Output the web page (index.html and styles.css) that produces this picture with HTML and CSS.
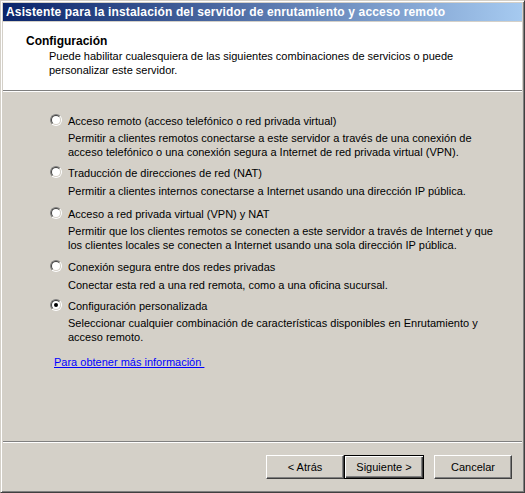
FILE: index.html
```html
<!DOCTYPE html>
<html lang="es">
<head>
<meta charset="utf-8">
<title>Asistente</title>
<link rel="stylesheet" href="styles.css">
</head>
<body>
<div class="window">
  <div class="titlebar">Asistente para la instalación del servidor de enrutamiento y acceso remoto</div>
  <div class="header">
    <div class="header-title">Configuración</div>
    <div class="header-text">Puede habilitar cualesquiera de las siguientes combinaciones de servicios o puede<br>personalizar este servidor.</div>
  </div>
  <div class="body">
    <div class="opt opt-1">
      <div class="opt-label"><span class="radio"></span>Acceso remoto (acceso telefónico o red privada virtual)</div>
      <div class="opt-desc">Permitir a clientes remotos conectarse a este servidor a través de una conexión de<br>acceso telefónico o una conexión segura a Internet de red privada virtual (VPN).</div>
    </div>
    <div class="opt opt-2">
      <div class="opt-label"><span class="radio"></span>Traducción de direcciones de red (NAT)</div>
      <div class="opt-desc">Permitir a clientes internos conectarse a Internet usando una dirección IP pública.</div>
    </div>
    <div class="opt opt-3">
      <div class="opt-label"><span class="radio"></span>Acceso a red privada virtual (VPN) y NAT</div>
      <div class="opt-desc">Permitir que los clientes remotos se conecten a este servidor a través de Internet y que<br>los clientes locales se conecten a Internet usando una sola dirección IP pública.</div>
    </div>
    <div class="opt opt-4">
      <div class="opt-label"><span class="radio"></span>Conexión segura entre dos redes privadas</div>
      <div class="opt-desc">Conectar esta red a una red remota, como a una oficina sucursal.</div>
    </div>
    <div class="opt opt-5">
      <div class="opt-label"><span class="radio checked"></span>Configuración personalizada</div>
      <div class="opt-desc">Seleccionar cualquier combinación de características disponibles en Enrutamiento y<br>acceso remoto.</div>
    </div>
    <a class="link" href="#">Para obtener más información&nbsp;</a>
  </div>
  <div class="footer">
    <button class="btn">&lt; Atrás</button>
    <button class="btn btn-default">Siguiente &gt;</button>
    <button class="btn btn-cancel">Cancelar</button>
  </div>
</div>
</body>
</html>
```
FILE: styles.css
```css
* { box-sizing: border-box; }
html, body { margin: 0; padding: 0; }
body {
  font-family: "Liberation Sans", Arial, sans-serif;
  font-size: 11px;
  color: #000;
  background: #d4d0c8;
}
.window {
  width: 525px;
  height: 493px;
  background: #d4d0c8;
  border: 1px solid;
  border-color: #d4d0c8 #404040 #404040 #d4d0c8;
  box-shadow: inset 1px 1px 0 #fff, inset -1px -1px 0 #808080;
  padding: 2px;
  display: flex;
  flex-direction: column;
}
.titlebar {
  height: 18px;
  background: linear-gradient(to right, #0a246a, #a6caf0);
  color: #fff;
  font-weight: bold;
  font-size: 12px;
  letter-spacing: 0.15px;
  line-height: 18px;
  padding-left: 3px;
  margin-bottom: 1px;
  white-space: nowrap;
}
.header {
  background: #fff;
  height: 69px;
  border-bottom: 1px solid #808080;
  box-shadow: 0 1px 0 #fff;
  padding: 12px 0 0 23px;
  margin-bottom: 1px;
}
.header-title {
  font-weight: bold;
  font-size: 12px;
  line-height: 14px;
}
.header-text {
  padding-left: 23px;
  margin-top: 1px;
  line-height: 14px;
}
.body {
  flex: 1;
  padding: 22px 0 0 47px;
  line-height: 14px;
  border-bottom: 1px solid #808080;
  box-shadow: 0 1px 0 #fff;
  margin-bottom: 1px;
}
.opt-label {
  display: flex;
  align-items: flex-start;
  white-space: nowrap;
}
.opt-desc {
  padding-left: 18px;
  margin-top: 3px;
  white-space: nowrap;
}
.opt-2 { margin-top: 7px; }
.opt-3 { margin-top: 9px; }
.opt-4 { margin-top: 8px; }
.opt-5 { margin-top: 7px; }
.opt-2 .opt-desc, .opt-4 .opt-desc { margin-top: 4px; }
.radio {
  width: 12px;
  height: 12px;
  border-radius: 50%;
  border: 1px solid;
  border-color: #808080 #fff #fff #808080;
  margin: 0 6px 0 0;
  flex: none;
  position: relative;
}
.radio::before {
  content: "";
  position: absolute;
  inset: 0;
  border-radius: 50%;
  border: 1px solid;
  border-color: #404040 #d4d0c8 #d4d0c8 #404040;
  background: #fff;
}
.radio.checked::after {
  content: "";
  position: absolute;
  left: 3px;
  top: 3px;
  width: 4px;
  height: 4px;
  border-radius: 50%;
  background: #000;
}
.link {
  display: inline-block;
  margin: 11px 0 0 4px;
  color: #0000ff;
  text-decoration: underline;
}
.footer {
  height: 47px;
  display: flex;
  align-items: flex-start;
  padding: 12px 10px 0 0;
  justify-content: flex-end;
}
.btn {
  font-family: "Liberation Sans", Arial, sans-serif;
  font-size: 11px;
  width: 78px;
  height: 24px;
  background: #d4d0c8;
  color: #000;
  border: 1px solid;
  border-color: #fff #404040 #404040 #fff;
  box-shadow: inset -1px -1px 0 #808080;
  padding: 0;
}
.btn-default {
  width: 80px;
  border: 1px solid #000;
  box-shadow: inset 1px 1px 0 #fff, inset -1px -1px 0 #404040, inset -2px -2px 0 #808080;
}
.btn-cancel { margin-left: 10px; }
```
